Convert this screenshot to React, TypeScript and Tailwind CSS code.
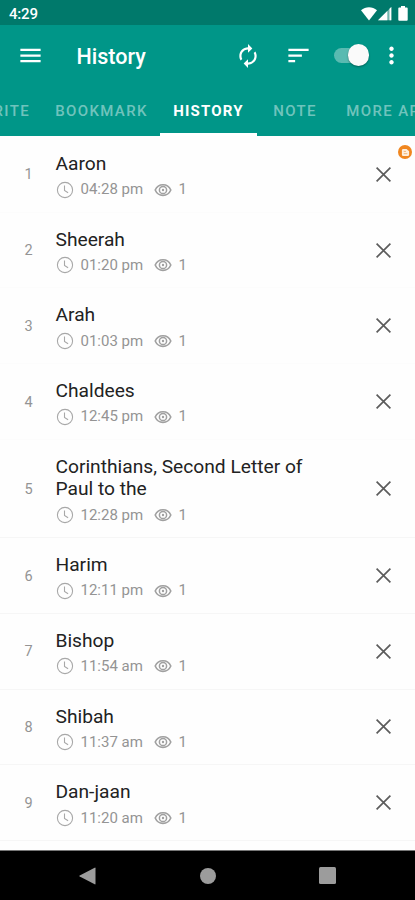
import { MdAutorenew, MdMenu, MdMoreVert, MdSort } from "react-icons/md";

const tabs = [
  { label: "FAVORITE", width: "w-[100px] pr-[4px]" },
  { label: "BOOKMARK", width: "w-[117px]" },
  { label: "HISTORY", width: "w-[97px]", active: true },
  { label: "NOTE", width: "w-[76px]" },
  { label: "MORE APPS", width: "w-[122px]" },
];

const items = [
  { title: "Aaron", time: "04:28 pm", views: 1 },
  { title: "Sheerah", time: "01:20 pm", views: 1 },
  { title: "Arah", time: "01:03 pm", views: 1 },
  { title: "Chaldees", time: "12:45 pm", views: 1 },
  { title: "Corinthians, Second Letter of Paul to the", time: "12:28 pm", views: 1, tall: true },
  { title: "Harim", time: "12:11 pm", views: 1 },
  { title: "Bishop", time: "11:54 am", views: 1 },
  { title: "Shibah", time: "11:37 am", views: 1 },
  { title: "Dan-jaan", time: "11:20 am", views: 1 },
];

function StatusBar() {
  return (
    <div className="flex h-[25px] shrink-0 items-center justify-between bg-[#00796b] pl-[9px] pr-[7px] pt-[2px] text-white">
      <span className="pt-[1px] text-[15px] font-medium tracking-[-0.2px]">4:29</span>
      <div className="flex items-center">
        <svg width="16" height="14" viewBox="0 0 16 14" fill="currentColor">
          <path d="M0 3.3C4.6-.7 11.4-.7 16 3.3L8 13.6z" />
        </svg>
        <svg width="14" height="14" viewBox="0 0 14 14" className="ml-[1px]" fill="currentColor">
          <path d="M0 13.3L13.3 0v13.3z" fillOpacity=".45" />
          <path d="M0 13.3L9.3 4v9.3zM11.5 1.8L13.3 0v13.3h-1.8z" />
        </svg>
        <svg width="10" height="15" viewBox="0 0 10 15" className="ml-[6px]" fill="currentColor">
          <path d="M3 0h4v1.6h1.8q.9 0 .9.9v11.3q0 .9-.9.9H1.2q-.9 0-.9-.9V2.5q0-.9.9-.9H3z" />
        </svg>
      </div>
    </div>
  );
}

function Toolbar() {
  return (
    <div className="flex h-[62px] shrink-0 items-center text-white">
      <MdMenu size={27} className="-mt-[2px] ml-[16.5px]" />
      <h1 className="ml-[33px] pt-[1px] text-[21.5px] font-medium leading-none">History</h1>

      <div className="ml-auto flex items-center pr-[10px]">
        <MdAutorenew size={26} className="mr-[24.5px]" />
        <MdSort size={27} className="-mt-[2px] mr-[22px]" />
        <div className="-mt-[2px] mr-[9px] flex h-[22px] w-[35px] items-center">
          <div className="flex h-[15px] w-[33px] items-center justify-end rounded-full bg-white/35">
            <div className="-mr-[2px] size-[21.5px] shrink-0 rounded-full bg-[#fafafa] shadow-[0_1px_2px_rgba(0,0,0,0.35)]" />
          </div>
        </div>
        <MdMoreVert size={27} className="-mt-[2px]" />
      </div>
    </div>
  );
}

function Tabs() {
  return (
    <div className="-ml-[57px] flex h-[49px] w-[512px] shrink-0">
      {tabs.map((tab) => (
        <div
          key={tab.label}
          className={`flex shrink-0 items-center justify-center whitespace-nowrap border-b-[3px] pt-[2px] text-[15px] ${tab.width} ${
            tab.active
              ? "border-white font-bold tracking-[1.2px] text-white"
              : "border-transparent font-medium tracking-[1.35px] text-white/45"
          }`}
        >
          {tab.label}
        </div>
      ))}
    </div>
  );
}

function ClockIcon() {
  return (
    <svg width="18" height="18" viewBox="0 0 18 18" fill="none" stroke="#a8a8a8" strokeWidth="1.1">
      <circle cx="9" cy="9" r="7.6" />
      <path d="M8.5 4.5v5l3.6 2.3" />
    </svg>
  );
}

function EyeIcon() {
  return (
    <svg width="18" height="18" viewBox="0 0 18 18" fill="none" stroke="#a0a0a0" className="ml-[7px]">
      <path d="M1.2 9C4.2 1.9 13.8 1.9 16.8 9C13.8 16.1 4.2 16.1 1.2 9z" strokeWidth="1.6" />
      <circle cx="9" cy="9" r="3.6" strokeWidth="1.5" />
      <circle cx="9" cy="9" r="1.2" fill="#a0a0a0" stroke="none" />
    </svg>
  );
}

function CloseIcon() {
  return (
    <svg width="15" height="15" viewBox="0 0 15 15" fill="none" stroke="#5c5c5c" strokeWidth="1.7">
      <path d="M.6.6l13.8 13.8M14.4.6L.6 14.4" />
    </svg>
  );
}

function AdBadge() {
  return (
    <div className="absolute right-[3px] top-[9px] flex size-[14px] items-center justify-center rounded-full bg-[#f0861f]">
      <svg width="9" height="9" viewBox="0 0 10 10">
        <path d="M1 2.5Q1 1 2.5 1h3.7L9 3.7v3.8Q9 9 7.5 9h-5Q1 9 1 7.5z" fill="#fdeedd" />
        <path d="M3 3.8h2.5M3 6.3h4" stroke="#f3b06c" />
      </svg>
    </div>
  );
}

export default function App() {
  return (
    <div className="flex h-[900px] w-[415px] flex-col overflow-hidden bg-white font-[Roboto,sans-serif]">
      <StatusBar />

      {/* Header */}
      <header className="flex shrink-0 flex-col overflow-hidden bg-[#009688]">
        <Toolbar />
        <Tabs />
      </header>

      {/* History list */}
      <main className="relative flex-1 overflow-hidden bg-[#fefefe] pt-[1px]">
        <AdBadge />
        {items.map((item, i) => (
          <div
            key={item.title}
            className={`flex items-center border-b ${i < 4 ? "border-[#fcfcfc]" : "border-[#f6f6f6]"} ${
              item.tall ? "h-[98.4px]" : "h-[75.7px]"
            }`}
          >
            <span className="w-[57px] shrink-0 pt-[2px] text-center text-[14.5px] text-[#949494]">{i + 1}</span>
            <div className="-ml-[1.5px] w-[265px] shrink-0 pt-[3px]">
              <h2 className="text-[19.2px] leading-[22.5px] text-[#222]">{item.title}</h2>
              <div className="mt-[5px] flex h-[18px] items-center text-[15px] text-[#949494]">
                <ClockIcon />
                <span className="ml-[7px] w-[66px] whitespace-nowrap">{item.time}</span>
                <EyeIcon />
                <span className="ml-[7px]">{item.views}</span>
              </div>
            </div>
            <div className="ml-auto mr-[24px]">
              <CloseIcon />
            </div>
          </div>
        ))}
      </main>

      {/* Android navigation bar */}
      <nav className="flex h-[50px] shrink-0 items-center border-t border-[#777] bg-black pl-[79px] text-[#9c9c9c]">
        <svg width="17" height="18" viewBox="0 0 17 18" fill="currentColor">
          <path d="M16.5 1.2v15.6q0 .9-.8.5L.7 9.5q-.8-.5 0-1L15.7.7q.8-.4.8.5z" />
        </svg>
        <div className="ml-[104px] size-[16px] rounded-full bg-[#9c9c9c]" />
        <div className="ml-[103px] size-[17px] rounded-[1.5px] bg-[#9c9c9c]" />
      </nav>
    </div>
  );
}
